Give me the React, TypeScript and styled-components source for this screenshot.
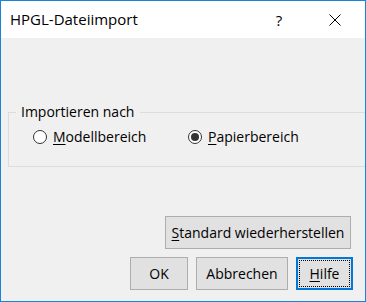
import { ReactElement } from 'react';
import styled, { createGlobalStyle } from 'styled-components';

const Global = createGlobalStyle`
  html, body {
    margin: 0;
    padding: 0;
    background: #ffffff;
  }
  body {
    font-family: 'Open Sans', 'Noto Sans', sans-serif;
    font-size: 14px;
    color: #000;
  }
`;

const Window = styled.div`
  box-sizing: border-box;
  width: 366px;
  height: 302px;
  border: 1px solid #1883d7;
  background: #f0f0f0;
  display: flex;
  flex-direction: column;
  overflow: hidden;
`;

const TitleBar = styled.div`
  height: 37px;
  flex: none;
  background: #ffffff;
  display: flex;
  align-items: center;
  padding: 0 7px 0 9px;
`;

const Title = styled.div`
  flex: 1;
  font-size: 15px;
  padding-bottom: 2px;
`;

const TitleButton = styled.div<{ $gap?: number }>`
  width: 46px;
  height: 37px;
  margin-right: ${(p) => p.$gap ?? 0}px;
  display: flex;
  align-items: center;
  justify-content: center;
  font-size: 15px;
`;

const Body = styled.div`
  flex: 1;
  display: flex;
  flex-direction: column;
  padding: 0 12px 11px 7px;
`;

const Group = styled.fieldset`
  margin: 66px -30px 0 0;
  padding: 8px 0 20px 7px;
  border: 1px solid #dcdcdc;
  min-width: 0;
`;

const Legend = styled.legend`
  padding: 0 6px 0 5px;
  line-height: 16px;
`;

const RadioRow = styled.div`
  display: flex;
  align-items: center;
  padding-left: 17px;
`;

const RadioLabel = styled.label<{ $width: number }>`
  display: flex;
  align-items: center;
  gap: 6px;
  width: ${(p) => p.$width}px;
  line-height: 18px;
`;

const RadioDot = styled.span<{ $checked?: boolean }>`
  box-sizing: border-box;
  width: 14px;
  height: 14px;
  border-radius: 50%;
  border: 1px solid #333;
  background: #fff;
  display: flex;
  align-items: center;
  justify-content: center;

  &::after {
    content: '';
    width: 8px;
    height: 8px;
    border-radius: 50%;
    background: #333;
    display: ${(p) => (p.$checked ? 'block' : 'none')};
  }
`;

const Spacer = styled.div`
  flex: 1;
`;

const ButtonRow = styled.div<{ $right?: number; $top?: number }>`
  display: flex;
  justify-content: flex-end;
  gap: 8px;
  padding-right: ${(p) => p.$right ?? 0}px;
  margin-top: ${(p) => p.$top ?? 0}px;
`;

const Button = styled.div<{ $width: number; $focused?: boolean }>`
  box-sizing: border-box;
  width: ${(p) => p.$width}px;
  height: 33px;
  background: #e1e1e1;
  border: ${(p) => (p.$focused ? '2px solid #0078d7' : '1px solid #adadad')};
  display: flex;
  align-items: center;
  justify-content: center;
  padding: ${(p) => (p.$focused ? '1px' : '0')};
`;

const FocusRing = styled.div`
  flex: 1;
  align-self: stretch;
  display: flex;
  align-items: center;
  justify-content: center;
  border: 1px dotted #000;
`;

const Mn = styled.span`
  text-decoration: underline;
  text-underline-offset: 2px;
`;

export default function App(): ReactElement {
  return (
    <>
      <Global />
      <Window>
        <TitleBar>
          <Title>HPGL-Dateiimport</Title>
          <TitleButton $gap={10}>?</TitleButton>
          <TitleButton>
            <svg width="12" height="12" viewBox="0 0 12 12">
              <path d="M0.5 0.5 L11.5 11.5 M11.5 0.5 L0.5 11.5" stroke="#000" strokeWidth="1" />
            </svg>
          </TitleButton>
        </TitleBar>
        <Body>
          <Group>
            <Legend>Importieren nach</Legend>
            <RadioRow>
              <RadioLabel $width={155}>
                <RadioDot />
                <span>
                  <Mn>M</Mn>odellbereich
                </span>
              </RadioLabel>
              <RadioLabel $width={140}>
                <RadioDot $checked />
                <span>
                  <Mn>P</Mn>apierbereich
                </span>
              </RadioLabel>
            </RadioRow>
          </Group>
          <Spacer />
          <ButtonRow $right={2}>
            <Button $width={186}>
              <span>
                <Mn>S</Mn>tandard wiederherstellen
              </span>
            </Button>
          </ButtonRow>
          <ButtonRow $top={8}>
            <Button $width={58}>OK</Button>
            <Button $width={92}>Abbrechen</Button>
            <Button $width={57} $focused>
              <FocusRing>
                <span>
                  <Mn>H</Mn>ilfe
                </span>
              </FocusRing>
            </Button>
          </ButtonRow>
        </Body>
      </Window>
    </>
  );
}
